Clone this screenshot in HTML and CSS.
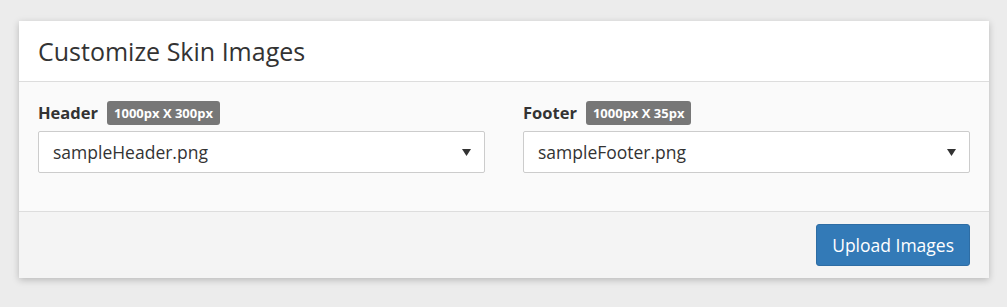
FILE: index.html
```html
<!DOCTYPE html>
<html lang="en">
<head>
  <meta charset="UTF-8" />
  <title>Customize Skin Images</title>
  <link rel="stylesheet" href="styles.css">
</head>
<body>

<div class="panel">
  <div class="panel-heading">Customize Skin Images</div>

  <div class="panel-body">
    <div class="field">
      <label class="field-label">Header <span class="badge">1000px X 300px</span></label>
      <div class="select">
        <span>sampleHeader.png</span>
        <svg class="caret" width="9" height="7" viewBox="0 0 9 7"><path d="M0 0h9L4.5 7z" fill="#333"/></svg>
      </div>
    </div>
    <div class="field">
      <label class="field-label">Footer <span class="badge">1000px X 35px</span></label>
      <div class="select">
        <span>sampleFooter.png</span>
        <svg class="caret" width="9" height="7" viewBox="0 0 9 7"><path d="M0 0h9L4.5 7z" fill="#333"/></svg>
      </div>
    </div>
  </div>

  <div class="panel-footer">
    <button class="btn-primary">Upload Images</button>
  </div>
</div>

</body>
</html>
```

FILE: styles.css
```css
body {
  margin: 0;
  padding: 21px 18px 28px 19px;
  background-color: #ececec;
  font-family: 'Open Sans', sans-serif;
  color: #333;
}

.panel {
  background-color: #fff;
  box-shadow: 0 2px 7px rgba(0, 0, 0, 0.22);
}

.panel-heading {
  padding: 14px 19px;
  font-size: 25px;
  line-height: 32px;
  color: #333;
  border-bottom: 1px solid #ddd;
}

.panel-body {
  display: grid;
  grid-template-columns: 1fr 1fr;
  gap: 38px;
  padding: 19px 19px 38px;
  background-color: #fafafa;
  border-bottom: 1px solid #ddd;
}

.field-label {
  display: flex;
  align-items: center;
  gap: 9px;
  font-size: 16.5px;
  font-weight: 700;
  line-height: 24px;
  margin-bottom: 6px;
}

.badge {
  display: inline-block;
  padding: 0 7px;
  background-color: #777;
  color: #fff;
  font-size: 13px;
  font-weight: 700;
  line-height: 24px;
  border-radius: 3px;
}

.select {
  display: flex;
  justify-content: space-between;
  align-items: center;
  height: 40px;
  padding: 0 13px 0 14px;
  background-color: #fff;
  border: 1px solid #ccc;
  border-radius: 2px;
  font-size: 17.5px;
}

.caret {
  display: block;
}

.panel-footer {
  display: flex;
  justify-content: flex-end;
  padding: 12px 19px;
  background-color: #f4f4f4;
}

.btn-primary {
  height: 42px;
  padding: 0 15px;
  background-color: #337ab7;
  border: 1px solid #2e6da4;
  border-radius: 3px;
  color: #fff;
  font-family: 'Open Sans', sans-serif;
  font-size: 17.5px;
}
```
